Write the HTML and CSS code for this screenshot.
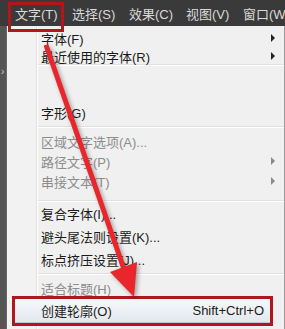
FILE: index.html
```html
<!DOCTYPE html>
<html lang="zh-CN">
<head>
    <meta charset="UTF-8">
    <title>文字菜单</title>
    <link rel="stylesheet" href="styles.css">
</head>
<body>
    <div class="screen">
        <div class="menubar">
            <span class="bar-item">文字(T)</span>
            <span class="bar-item">选择(S)</span>
            <span class="bar-item">效果(C)</span>
            <span class="bar-item">视图(V)</span>
            <span class="bar-item">窗口(W)</span>
        </div>

        <div class="work">
            <div class="side"><span class="side-mark">›</span></div>
            <div class="menu">
                <div class="item first">字体(F)<i class="sub"></i></div>
                <div class="item short">最近使用的字体(R)<i class="sub"></i></div>
                <div class="sep"></div>
                <div class="blank"></div>
                <div class="item tall">字形(G)</div>
                <div class="sep sep-a"></div>
                <div class="item off">区域文字选项(A)...</div>
                <div class="item off">路径文字(P)<i class="sub"></i></div>
                <div class="item off">串接文本(T)<i class="sub"></i></div>
                <div class="sep sep-b"></div>
                <div class="item wide">复合字体(I)...</div>
                <div class="item wide">避头尾法则设置(K)...</div>
                <div class="item wide">标点挤压设置(J)...</div>
                <div class="sep sep-c"></div>
                <div class="item off fit">适合标题(H)</div>
                <div class="item hot">
                    <span>创建轮廓(O)</span>
                    <span class="keys">Shift+Ctrl+O</span>
                </div>
            </div>
        </div>

        <div class="callout callout-top"></div>
        <div class="callout callout-bottom"></div>

        <svg class="arrow" width="285" height="329" viewBox="0 0 285 329">
            <g class="arrow-shape">
                <line x1="46" y1="45" x2="124" y2="269" stroke="#e8262b" stroke-width="5"/>
                <polygon points="134,297 110,272 137,262" fill="#e8262b"/>
            </g>
        </svg>
    </div>
</body>
</html>
```

FILE: styles.css
```css
body {
    margin: 0;
    background-color: #4a4a4a;
    font-family: 'Liberation Sans', 'Noto Sans CJK SC', sans-serif;
    font-size: 13px;
}

.screen {
    position: relative;
    width: 285px;
    height: 329px;
    overflow: hidden;
}

.menubar {
    height: 26px;
    background-color: #3a3a3a;
    color: #d9d9d9;
    display: flex;
    align-items: center;
    padding-left: 15px;
}

.bar-item {
    flex: none;
    width: 57px;
    white-space: nowrap;
}

.work {
    display: flex;
    height: 303px;
}

.side {
    width: 6px;
    background-color: #555;
    border-right: 1px solid #6a6a6a;
    color: #ccc;
    font-size: 10px;
}

.side-mark {
    display: block;
    margin-top: 40px;
    padding-left: 1px;
}

.menu {
    flex: 1;
    padding-top: 2px;
    background: linear-gradient(to right, #f2f2f2 0 29px, #e2e2e2 29px 30px, #fff 30px 31px, #f0f0f0 31px);
    border-right: 1px solid #9a9a9a;
    color: #1b1b1b;
}

.item {
    position: relative;
    display: flex;
    justify-content: space-between;
    align-items: center;
    height: 20px;
    padding-left: 34px;
    padding-right: 18px;
    white-space: nowrap;
}

.item.short {
    height: 16px;
}

.item.tall {
    height: 22px;
}

.item.wide {
    height: 23px;
}

.item.fit {
    height: 20px;
}

.item.off {
    color: #8c8c8c;
}

.sub {
    position: absolute;
    right: 9px;
    top: 50%;
    margin-top: -4px;
    border-left: 4px solid #222;
    border-top: 4px solid transparent;
    border-bottom: 4px solid transparent;
}

.off .sub {
    border-left-color: #8a8a8a;
}

.sep {
    height: 1px;
    margin-left: 31px;
    background-color: #e0e0e0;
    border-bottom: 1px solid #fff;
}

.sep-a {
    margin-top: 3px;
    margin-bottom: 3px;
}

.sep-b {
    margin-top: 9px;
    margin-bottom: 0;
}

.sep-c {
    margin-top: 2px;
    margin-bottom: 3px;
}

.blank {
    height: 35px;
}

.item.hot {
    height: 23px;
    margin: 0 11px 0 7px;
    padding-left: 26px;
    padding-right: 8px;
    border: 1px solid #bcc8d6;
    border-radius: 2px;
    background: linear-gradient(#f6f8fb, #e3e8ee);
}

.keys {
    color: #1b1b1b;
}

.callout {
    position: absolute;
    border: 3px solid #b3151d;
    box-sizing: border-box;
}

.callout-top {
    left: 8px;
    top: 2px;
    width: 56px;
    height: 30px;
}

.callout-bottom {
    left: 12px;
    top: 296px;
    width: 261px;
    height: 30px;
}

.arrow {
    position: absolute;
    left: 0;
    top: 0;
}

.arrow-shape {
    filter: drop-shadow(2px 2px 2px rgba(0, 0, 0, 0.35));
}
```
